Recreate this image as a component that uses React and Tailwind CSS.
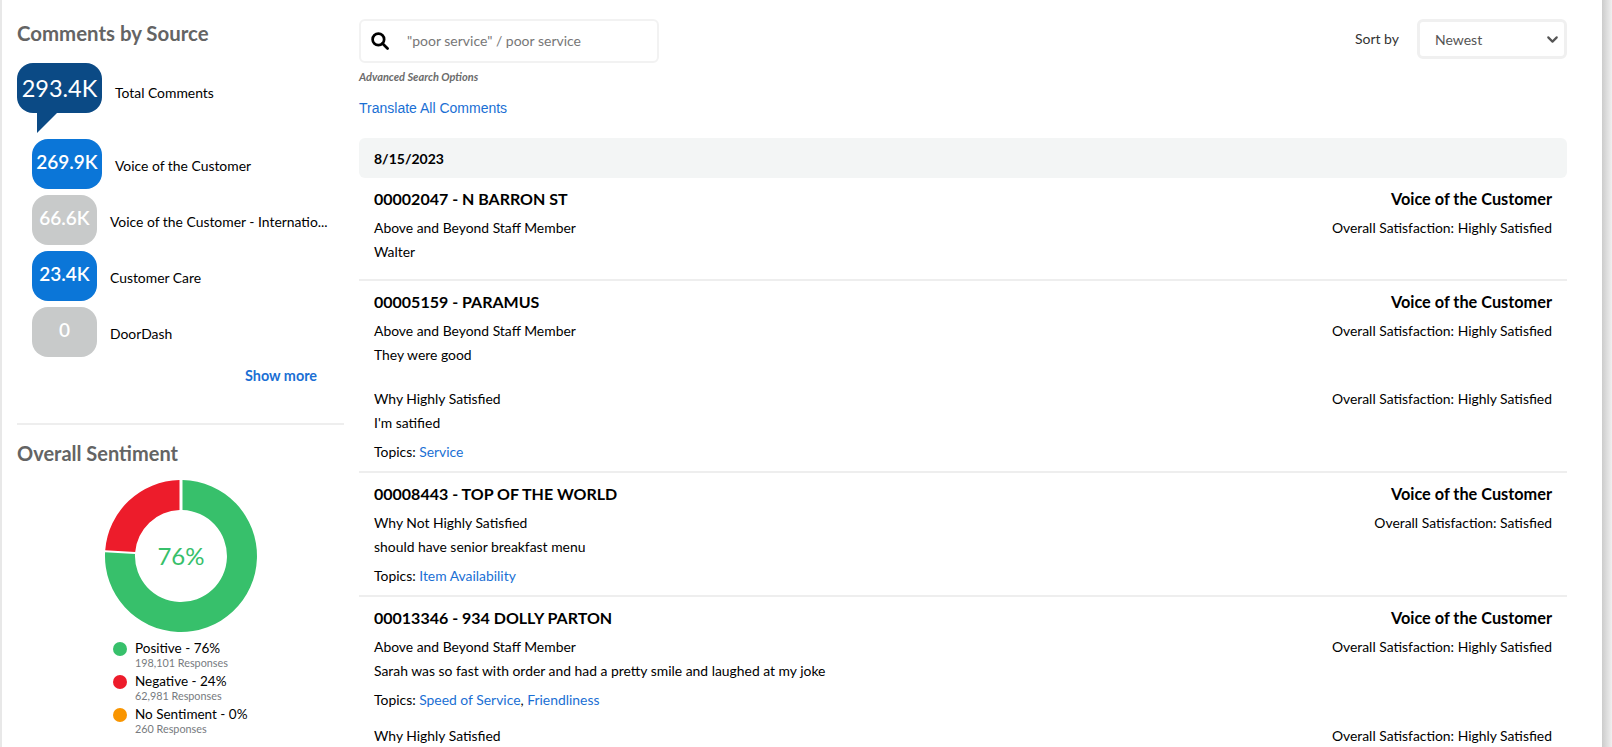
import React from 'react';
import { ChevronDown } from 'lucide-react';

const sources = [
  { value: '293.4K', label: 'Total Comments', kind: 'total' },
  { value: '269.9K', label: 'Voice of the Customer', kind: 'wide' },
  { value: '66.6K', label: 'Voice of the Customer - Internatio...', kind: 'off' },
  { value: '23.4K', label: 'Customer Care', kind: 'on' },
  { value: '0', label: 'DoorDash', kind: 'off' },
];

const legend = [
  { color: 'bg-[#37c06b]', label: 'Positive - 76%', sub: '198,101 Responses' },
  { color: 'bg-[#ed1c2b]', label: 'Negative - 24%', sub: '62,981 Responses' },
  { color: 'bg-[#f99500]', label: 'No Sentiment - 0%', sub: '260 Responses' },
];

const SearchIcon = () => (
  <svg width="18" height="18" viewBox="0 0 20 20" fill="none" stroke="#000" strokeWidth="3">
    <circle cx="8.2" cy="8.2" r="6.4" />
    <path d="M12.8 12.8 18.4 18.4" strokeLinecap="round" />
  </svg>
);

const SourceRow = ({ value, label, kind }) => {
  if (kind === 'total') {
    return (
      <div className="flex items-start h-[76px]">
        <div className="relative flex justify-center w-[85px] h-[50px] rounded-2xl bg-[#0b4a85] text-white text-[23.5px] leading-[50px]">
          {value}
          <div className="absolute left-[20px] top-[50px] w-0 h-0 border-t-[20px] border-t-[#0b4a85] border-r-[20px] border-r-transparent" />
        </div>
        <span className="ml-[13px] mt-[18px] text-[13.9px] leading-[24px]">{label}</span>
      </div>
    );
  }
  const width = kind === 'wide' ? 'w-[70px]' : 'w-[65px]';
  const bg = kind === 'off' ? 'bg-[#c8caca]' : 'bg-[#0b76d8]';
  return (
    <div className="flex items-start h-[56px] ml-[15px]">
      <div className={`${width} ${bg} h-[50px] rounded-2xl flex justify-center text-white text-[19px] font-semibold leading-[46px] shrink-0`}>
        {value}
      </div>
      <span className="ml-[13px] mt-[15px] text-[13.9px] leading-[24px] whitespace-nowrap">{label}</span>
    </div>
  );
};

const Donut = () => (
  <div className="relative w-[154px] h-[154px]">
    <svg width="154" height="154" viewBox="0 0 154 154">
      <path d="M78.5 1.02A76 76 0 1 1 1.08 73.2L31 75.1A46 46 0 1 0 78.5 31.02Z" fill="#37c06b" />
      <path d="M75.5 1.02A76 76 0 0 0 1.22 71.2L31.2 73.1A46 46 0 0 1 75.5 31.02Z" fill="#ed1c2b" />
    </svg>
    <div className="absolute inset-0 flex items-center justify-center text-[24px] text-[#37c06b]">76%</div>
  </div>
);

const Comment = ({ title, blocks, topics, last }) => (
  <div className={`px-[15px] pt-[11px] ${last ? '' : 'border-b-2 border-[#eeeeee]'}`}>
    <div className="flex justify-between text-[16px] font-bold leading-[20px]">
      <span>{title}</span>
      <span className="text-[16.3px]">Voice of the Customer</span>
    </div>
    <div className="pt-[9px]">
      {blocks.map((b, i) => (
        <div key={i} className={i > 0 ? 'mt-[24px]' : ''}>
          <div className="flex justify-between text-[13.9px] leading-[20px]">
            <span>{b.q}</span>
            <span>{b.sat}</span>
          </div>
          {b.a && <div className="mt-[4px] text-[13.9px] leading-[20px]">{b.a}</div>}
        </div>
      ))}
    </div>
    {topics && (
      <div className="mt-[9px] text-[13.9px] leading-[20px]">
        Topics:{' '}
        {topics.map((t, i) => (
          <span key={t}>
            {i > 0 && ', '}
            <a className="text-[#1a6fd4]">{t}</a>
          </span>
        ))}
      </div>
    )}
    <div className={topics ? 'h-[9px]' : 'h-[17px]'} />
  </div>
);

const HS = 'Overall Satisfaction: Highly Satisfied';

export default function App() {
  return (
    <div className="h-[747px] overflow-hidden flex bg-white text-black font-['Lato','Liberation_Sans',sans-serif]">
      <div className="w-[2px] shrink-0 bg-[#e8e8e8]" />

      {/* left column */}
      <aside className="w-[343px] shrink-0 pl-[15px] pt-[21px]">
        <h2 className="text-[20.4px] font-bold text-[#646464] leading-[24px]">Comments by Source</h2>
        <div className="mt-[18px]">
          {sources.map((s) => (
            <SourceRow key={s.label} {...s} />
          ))}
        </div>
        <div className="text-right pr-[28px] mt-[3px] text-[14.4px] font-bold text-[#1a6fd4] leading-[20px]">Show more</div>
        <div className="mt-[37px] mr-[1px] h-[2px] bg-[#eeeeee]" />
        <h2 className="mt-[16px] text-[20px] font-bold text-[#646464] leading-[24px]">Overall Sentiment</h2>
        <div className="mt-[14px] flex justify-center">
          <Donut />
        </div>
        <div className="mt-[7px] ml-[96px]">
          {legend.map((l) => (
            <div key={l.label} className="flex h-[33px]">
              <span className={`${l.color} w-[14px] h-[14px] rounded-full mt-[2px]`} />
              <div className="ml-[8px]">
                <div className="text-[13.5px] leading-[17px]">{l.label}</div>
                <div className="text-[10.8px] leading-[11px] text-[#777b80]">{l.sub}</div>
              </div>
            </div>
          ))}
        </div>
      </aside>

      {/* main */}
      <main className="w-[1208px] ml-[14px] shrink-0 pt-[19px]">
        <div className="flex justify-between">
          <div>
            <div className="flex items-center w-[300px] h-[44px] border-2 border-[#f2f2f2] rounded-md pl-[10px]">
              <SearchIcon />
              <span className="ml-[18px] -mt-[1px] text-[14px] text-[#777777]">"poor service" / poor service</span>
            </div>
            <div className="mt-[7px] text-[11px] italic font-bold text-[#6b6b6b] leading-[14px]">Advanced Search Options</div>
            <div className="mt-[14px] text-[14px] text-[#1a6fd4] leading-[20px] font-['Liberation_Sans',sans-serif]">Translate All Comments</div>
          </div>
          <div className="flex items-start">
            <span className="mt-[11px] text-[14px] text-[#333333] leading-[18px]">Sort by</span>
            <div className="ml-[18px] flex items-center justify-between w-[150px] h-[40px] border-[3px] border-[#f0f0f0] rounded-md pl-[15px] pr-[3px] text-[14px] text-[#555555]">
              Newest
              <ChevronDown size={17} strokeWidth={3} />
            </div>
          </div>
        </div>

        <div className="mt-[20px] h-[40px] rounded-md bg-[#f3f5f5] px-[15px] flex items-center text-[14px] font-bold">8/15/2023</div>

        <Comment
          title="00002047 - N BARRON ST"
          blocks={[{ q: 'Above and Beyond Staff Member', sat: HS, a: 'Walter' }]}
        />
        <Comment
          title="00005159 - PARAMUS"
          blocks={[
            { q: 'Above and Beyond Staff Member', sat: HS, a: 'They were good' },
            { q: 'Why Highly Satisfied', sat: HS, a: "I'm satified" },
          ]}
          topics={['Service']}
        />
        <Comment
          title="00008443 - TOP OF THE WORLD"
          blocks={[{ q: 'Why Not Highly Satisfied', sat: 'Overall Satisfaction: Satisfied', a: 'should have senior breakfast menu' }]}
          topics={['Item Availability']}
        />
        <Comment
          title="00013346 - 934 DOLLY PARTON"
          blocks={[
            { q: 'Above and Beyond Staff Member', sat: HS, a: 'Sarah was so fast with order and had a pretty smile and laughed at my joke' },
          ]}
          topics={['Speed of Service', 'Friendliness']}
          last
        />
        <div className="px-[15px] mt-[7px] flex justify-between text-[13.9px] leading-[20px]">
          <span>Why Highly Satisfied</span>
          <span>{HS}</span>
        </div>
      </main>

      <div className="flex-1" />
      <div className="w-[10px] shrink-0 bg-gradient-to-r from-[#cccccc] to-[#f0f0f0]" />
    </div>
  );
}
